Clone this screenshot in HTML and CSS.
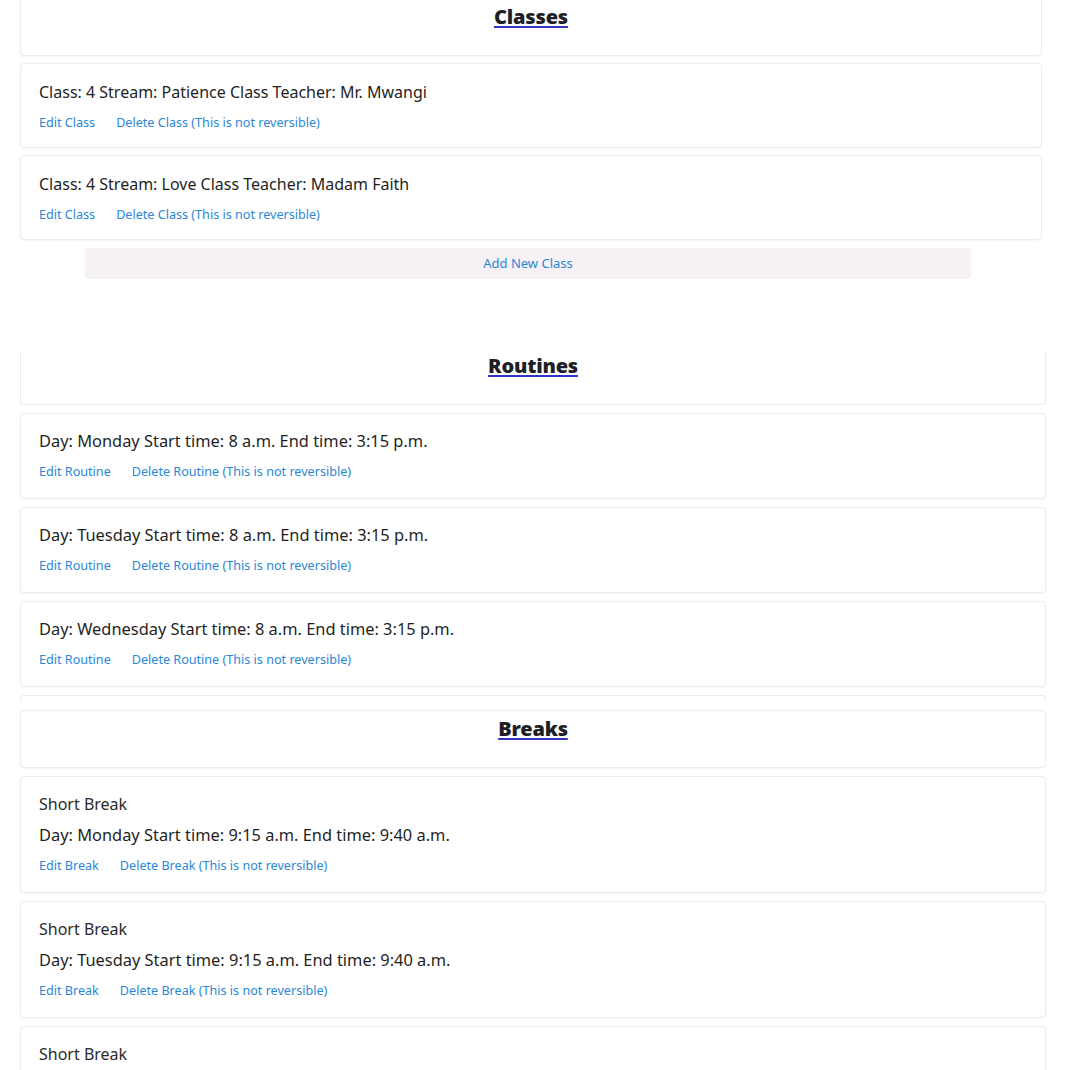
FILE: index.html
```html
<!DOCTYPE html>
<html lang="en">
<head>
<meta charset="utf-8">
<title>School Setup</title>
<link rel="stylesheet" href="styles.css">
</head>
<body>
<main class="page">
  <section class="section section-classes">
    <div class="card head-card head-first">
      <h2 class="section-title"><a href="#">Classes</a></h2>
    </div>
    <div class="card item-card class-card">
      <p class="item-title">Class: 4 Stream: Patience Class Teacher: Mr. Mwangi</p>
      <div class="links"><a href="#">Edit Class</a><a href="#">Delete Class (This is not reversible)</a></div>
    </div>
    <div class="card item-card class-card">
      <p class="item-title">Class: 4 Stream: Love Class Teacher: Madam Faith</p>
      <div class="links"><a href="#">Edit Class</a><a href="#">Delete Class (This is not reversible)</a></div>
    </div>
    <a href="#" class="add-btn">Add New Class</a>
  </section>

  <section class="section section-routines">
    <div class="card head-card head-cut">
      <h2 class="section-title"><a href="#">Routines</a></h2>
    </div>
    <div class="card item-card routine-card">
      <p class="item-title item-day">Day: Monday Start time: 8 a.m. End time: 3:15 p.m.</p>
      <div class="links"><a href="#">Edit Routine</a><a href="#">Delete Routine (This is not reversible)</a></div>
    </div>
    <div class="card item-card routine-card">
      <p class="item-title item-day">Day: Tuesday Start time: 8 a.m. End time: 3:15 p.m.</p>
      <div class="links"><a href="#">Edit Routine</a><a href="#">Delete Routine (This is not reversible)</a></div>
    </div>
    <div class="card item-card routine-card">
      <p class="item-title item-day">Day: Wednesday Start time: 8 a.m. End time: 3:15 p.m.</p>
      <div class="links"><a href="#">Edit Routine</a><a href="#">Delete Routine (This is not reversible)</a></div>
    </div>
    <div class="card sliver"></div>
  </section>

  <section class="section section-breaks">
    <div class="card head-card head-breaks">
      <h2 class="section-title"><a href="#">Breaks</a></h2>
    </div>
    <div class="card item-card">
      <p class="item-name">Short Break</p>
      <p class="item-title item-day break-day">Day: Monday Start time: 9:15 a.m. End time: 9:40 a.m.</p>
      <div class="links"><a href="#">Edit Break</a><a href="#">Delete Break (This is not reversible)</a></div>
    </div>
    <div class="card item-card">
      <p class="item-name">Short Break</p>
      <p class="item-title item-day break-day">Day: Tuesday Start time: 9:15 a.m. End time: 9:40 a.m.</p>
      <div class="links"><a href="#">Edit Break</a><a href="#">Delete Break (This is not reversible)</a></div>
    </div>
    <div class="card item-card">
      <p class="item-name">Short Break</p>
      <p class="item-title item-day break-day">Day: Wednesday Start time: 9:15 a.m. End time: 9:40 a.m.</p>
      <div class="links"><a href="#">Edit Break</a><a href="#">Delete Break (This is not reversible)</a></div>
    </div>
  </section>
</main>
</body>
</html>
```
FILE: styles.css
```css
* { box-sizing: border-box; }
html, body { margin: 0; padding: 0; background: #ffffff; }
body {
  font-family: "Noto Sans", "Open Sans", "Liberation Sans", sans-serif;
  color: #262626;
  height: 1070px;
  overflow: hidden;
}
.page { padding: 0 0 0 20px; }

.section { display: flex; flex-direction: column; gap: 8px; }
.section-classes { width: 1022px; margin-top: -8px; gap: 7px; }
.section-routines { width: 1026px; margin-top: 72px; }
.section-breaks { width: 1026px; margin-top: 8px; }

.card {
  background: #fff;
  border: 1px solid #ececec;
  border-radius: 4px;
  box-shadow: 0 1px 2px rgba(0,0,0,0.04);
}

.head-card { padding: 0 18px 24px; text-align: center; }
.head-first { padding-top: 10px; }
.head-cut { padding-top: 0; border-top-color: transparent; border-top-left-radius: 0; border-top-right-radius: 0; box-shadow: none; }
.head-breaks { padding-top: 4px; }

.section-title {
  margin: 0;
  font-family: "Noto Sans", "Open Sans", sans-serif;
  font-weight: 900;
  font-size: 20px;
  line-height: 28px;
  letter-spacing: -0.2px;
}
.section-title a {
  color: #1e1f26;
  text-decoration: underline;
  text-decoration-color: #3434c4;
  text-decoration-thickness: 2px;
  text-underline-offset: 2px;
}

.item-card { padding: 15px 18px 16px 18px; }
.class-card { padding-top: 16px; padding-bottom: 14px; }
.item-title, .item-name {
  margin: 0;
  font-size: 16px;
  line-height: 24px;
  font-weight: 400;
  color: #1f1f1f;
}
.item-title { font-weight: 450; }
.item-day { font-size: 16.4px; }
.item-name { font-weight: 400; color: #2a2a2a; }
.break-day { margin-top: 7px; }

.links { display: flex; gap: 21px; margin-top: 9px; line-height: 20px; }
.links a {
  font-size: 12.6px;
  color: #2a87d6;
  text-decoration: none;
}

.add-btn {
  display: block;
  margin-top: 1px;
  margin-left: 65px;
  width: 886px;
  height: 31px;
  line-height: 31px;
  text-align: center;
  background: #f6f1f4;
  border-radius: 4px;
  font-size: 13px;
  color: #2a87d6;
  text-decoration: none;
}

.sliver { height: 7px; border-bottom: none; border-bottom-left-radius: 0; border-bottom-right-radius: 0; box-shadow: none; }
```
